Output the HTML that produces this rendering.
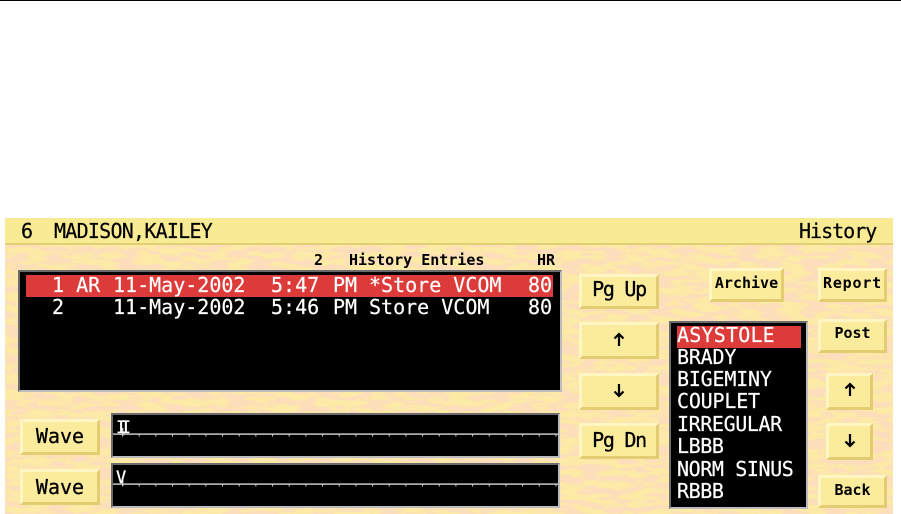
<!DOCTYPE html>
<html><head><meta charset="utf-8"><style>
html,body{margin:0;padding:0;background:#fff;width:901px;height:514px;overflow:hidden}
body{position:relative;font-family:"DejaVu Sans Mono","Liberation Mono",monospace}
.a{position:absolute;white-space:pre}
.panel{position:absolute;left:5px;top:218px;width:888px;height:296px;background:#fbdc9c;overflow:hidden}
.panel svg{position:absolute;left:0;top:0}
.title{position:absolute;left:5px;top:218px;width:888px;height:25px;background:#f9ea94;border-bottom:2px solid #e3cf73;overflow:hidden}
.btn{position:absolute;box-sizing:border-box;background:#fbeb9c;border:3px solid;border-color:#fff6c4 #e2cd72 #e2cd72 #fff6c4;color:#000;text-align:center;font-weight:bold;font-size:15px}
.btn.b{font-weight:normal;font-size:20px;-webkit-text-stroke:.3px #000}
.box{position:absolute;box-sizing:border-box;background:#000;border:2px solid;border-color:#6c6c6c #bdbdbd #bdbdbd #6c6c6c}
.t{position:absolute;white-space:pre;font-size:20px;line-height:22px;color:#fff;-webkit-text-stroke:.2px #fff}
.k{position:absolute;white-space:pre;font-size:20px;line-height:24px;color:#000;-webkit-text-stroke:.2px #000}
.h{position:absolute;white-space:pre;font-size:15px;line-height:18px;font-weight:bold;color:#000}
</style></head><body>
<div class="a" style="left:0;top:0;width:901px;height:1px;background:#000"></div>
<div class="panel"><svg width="888" height="296"><filter id="f" x="0" y="0" width="100%" height="100%"><feTurbulence type="fractalNoise" baseFrequency="0.045 0.17" numOctaves="3" seed="7"/><feColorMatrix type="matrix" values="0 0 0 0 0.97 0 0 0 0 0.72 0 0 0 0 0.50 5 0 0 0 -2.1"/></filter><rect width="888" height="296" fill="#fdeaa6"/><rect width="888" height="296" filter="url(#f)"/></svg></div>
<div class="title"></div>
<div class="k" style="left:21px;top:219px">6</div>
<div class="k" style="left:54px;top:219px;letter-spacing:-.75px">MADISON,KAILEY</div>
<div class="k" style="left:799px;top:219px;letter-spacing:-1px">History</div>

<div class="h" style="left:314px;top:251px">2</div>
<div class="h" style="left:349px;top:251px">History Entries</div>
<div class="h" style="left:537px;top:251px">HR</div>

<div class="box" style="left:18px;top:270px;width:544px;height:122px"></div>
<div class="a" style="left:26px;top:275px;width:527px;height:22px;background:#dd3a3a"></div>
<div class="t" style="left:52px;top:274px">1 AR</div>
<div class="t" style="left:113px;top:274px">11-May-2002</div>
<div class="t" style="left:271px;top:274px">5:47</div>
<div class="t" style="left:333px;top:274px">PM</div>
<div class="t" style="left:369px;top:274px">*Store VCOM</div>
<div class="t" style="left:528px;top:274px">80</div>
<div class="t" style="left:52px;top:296px">2</div>
<div class="t" style="left:113px;top:296px">11-May-2002</div>
<div class="t" style="left:271px;top:296px">5:46</div>
<div class="t" style="left:333px;top:296px">PM</div>
<div class="t" style="left:369px;top:296px">Store VCOM</div>
<div class="t" style="left:528px;top:296px">80</div>

<div class="btn b" style="left:579px;top:274px;width:80px;height:35px;line-height:24px;letter-spacing:-1.3px">Pg Up</div>
<div class="btn" style="left:579px;top:322px;width:80px;height:37px"></div>
<div class="btn" style="left:579px;top:373px;width:80px;height:37px"></div>
<div class="btn b" style="left:579px;top:423px;width:80px;height:36px;line-height:29px;letter-spacing:-1.3px">Pg Dn</div>
<div class="btn" style="left:709px;top:268px;width:75px;height:34px;line-height:24px">Archive</div>
<div class="btn" style="left:818px;top:268px;width:69px;height:34px;line-height:24px;letter-spacing:.8px">Report</div>
<div class="btn" style="left:818px;top:319px;width:69px;height:34px;line-height:22px">Post</div>
<div class="btn" style="left:826px;top:373px;width:47px;height:37px"></div>
<div class="btn" style="left:826px;top:423px;width:47px;height:37px"></div>
<div class="btn" style="left:818px;top:475px;width:69px;height:33px;line-height:24px">Back</div>
<div class="btn b" style="left:20px;top:419px;width:80px;height:36px;line-height:29px">Wave</div>
<div class="btn b" style="left:20px;top:469px;width:80px;height:36px;line-height:30px">Wave</div>

<svg class="a" style="left:0;top:0" width="901" height="514" fill="none" stroke="#000" stroke-width="2.2">
<path d="M619 346V334M614.5 338.5L619 334L623.5 338.5"/>
<path d="M619 384V396M614.5 391.5L619 396L623.5 391.5"/>
<path d="M850 396V384M845.5 388.5L850 384L854.5 388.5"/>
<path d="M850 434V446M845.5 441.5L850 446L854.5 441.5"/>
</svg>

<div class="box" style="left:111px;top:413px;width:449px;height:45px"></div>
<div class="box" style="left:111px;top:463px;width:449px;height:45px"></div>
<svg class="a" style="left:0;top:0" width="901" height="514">
<defs><pattern id="p" x="122" y="0" width="16.67" height="514" patternUnits="userSpaceOnUse"><rect x="0" y="0" width="1" height="514" fill="#ccc"/></pattern></defs>
<rect x="113" y="433.4" width="445" height="1.4" fill="#d4d4d4"/>
<rect x="113" y="483.4" width="445" height="1.4" fill="#d4d4d4"/>
<rect x="122" y="434" width="436" height="2.5" fill="url(#p)"/>
<rect x="122" y="484" width="436" height="2.5" fill="url(#p)"/>
<rect x="122" y="428" width="1.4" height="8" fill="#ccc"/>
<rect x="122" y="478" width="1.4" height="8" fill="#ccc"/>
</svg>
<div class="a" style="left:116px;top:418px;font-size:17px;line-height:20px;color:#fff;letter-spacing:-5.5px;-webkit-text-stroke:.3px #fff">II</div>
<div class="a" style="left:116px;top:468px;font-size:17px;line-height:20px;color:#fff;-webkit-text-stroke:.3px #fff">V</div>

<div class="box" style="left:669px;top:321px;width:139px;height:188px"></div>
<div class="a" style="left:677px;top:326px;width:124px;height:22px;background:#dd3a3a"></div>
<div class="t" style="left:677px;top:324px;letter-spacing:.2px">ASYSTOLE</div>
<div class="t" style="left:677px;top:346px;letter-spacing:-.2px">BRADY</div>
<div class="t" style="left:677px;top:368px;letter-spacing:-.2px">BIGEMINY</div>
<div class="t" style="left:677px;top:390px;letter-spacing:-.2px">COUPLET</div>
<div class="t" style="left:677px;top:413px;letter-spacing:-.4px">IRREGULAR</div>
<div class="t" style="left:677px;top:435px;letter-spacing:-.4px">LBBB</div>
<div class="t" style="left:677px;top:458px;letter-spacing:-.4px">NORM SINUS</div>
<div class="t" style="left:677px;top:480px;letter-spacing:-.4px">RBBB</div>
</body></html>
